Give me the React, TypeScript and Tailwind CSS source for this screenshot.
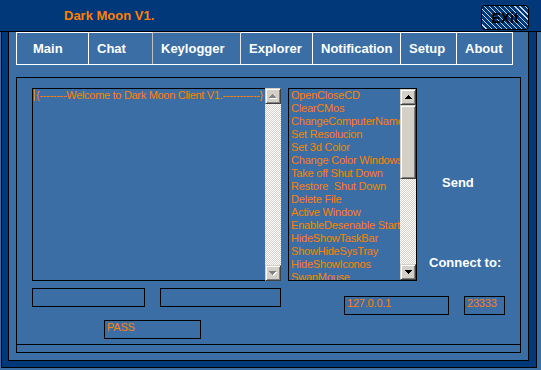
import React from "react";

const FONT = { fontFamily: '"Liberation Sans", Arial, sans-serif' };

function Arrow({ up, disabled }: { up: boolean; disabled?: boolean }) {
  const pts = up ? "3.5,0 7,4 0,4" : "0,0 7,0 3.5,4";
  if (disabled) {
    return (
      <svg width="8" height="5" viewBox="0 0 8 5" shapeRendering="crispEdges">
        <polygon points={pts} transform="translate(1,1)" fill="#ffffff" />
        <polygon points={pts} fill="#808080" />
      </svg>
    );
  }
  return (
    <svg width="7" height="4" viewBox="0 0 7 4" shapeRendering="crispEdges">
      <polygon points={pts} fill="#000000" />
    </svg>
  );
}

function SBtn({ up, disabled }: { up: boolean; disabled?: boolean }) {
  return (
    <div className="flex h-[16px] w-[16px] shrink-0 items-center justify-center border border-t-[#d4d0c8] border-l-[#d4d0c8] border-r-[#404040] border-b-[#404040] bg-[#d4d0c8] shadow-[inset_1px_1px_#ffffff,inset_-1px_-1px_#808080]">
      <Arrow up={up} disabled={disabled} />
    </div>
  );
}

function Track({ className }: { className?: string }) {
  return (
    <div
      className={
        "bg-[image:conic-gradient(#ffffff_25%,#d4d0c8_0_50%,#ffffff_0_75%,#d4d0c8_0)] bg-[length:2px_2px] " +
        (className ?? "")
      }
    />
  );
}

const tabs = [
  { label: "Main", cls: "w-[72px] pl-[16px] border-t-white border-r-white" },
  { label: "Chat", cls: "w-[64px] pl-[8px] border-t-white border-r-[#c0c0c0]" },
  { label: "Keylogger", cls: "w-[88px] pl-[8px] border-t-[#c8c8c8] border-r-[#e8e8e8]" },
  { label: "Explorer", cls: "w-[72px] pl-[8px] border-t-white border-r-white" },
  { label: "Notification", cls: "w-[88px] pl-[8px] border-t-white border-r-white" },
  { label: "Setup", cls: "w-[56px] pl-[8px] border-t-white border-r-white" },
  { label: "About", cls: "w-[56px] pl-[8px] border-t-white border-r-white" },
];

const items = [
  "OpenCloseCD",
  "ClearCMos",
  "ChangeComputerName",
  "Set Resolucion",
  "Set 3d Color",
  "Change Color Windows",
  "Take off Shut Down",
  "Restore  Shut Down",
  "Delete File",
  "Active Window",
  "EnableDesenable Start",
  "HideShowTaskBar",
  "ShowHideSysTray",
  "HideShowIconos",
  "SwapMouse",
];

export default function App() {
  return (
    <div className="h-[370px] w-[541px] overflow-hidden bg-[#3a6ea5]" style={FONT}>
      {/* Title bar */}
      <div className="flex h-[32px] w-[541px] border-b border-black bg-[#00387a]">
        <div className="flex flex-1 items-center pl-[64px] text-[13px] font-bold leading-[15px] text-[#ff8000]">
          Dark Moon V1.
        </div>
        <div className="mr-[12px] mt-[5px] flex h-[25px] w-[48px] items-center justify-center rounded-[4px] border border-black bg-[image:repeating-linear-gradient(45deg,#00387a_0px,#00387a_2.8px,#c8d4e8_2.8px,#c8d4e8_3.6px)] text-[14px] font-bold leading-[16px] text-black">
          EXit
        </div>
      </div>

      {/* Frame */}
      <div className="ml-[1px] h-[336px] w-[536px] border-x border-b border-black bg-[#00387a] pb-[6px] pl-[6px] pr-[7px]">
        <div className="h-full w-full border-x border-b border-black bg-[#3a6ea5]">
          {/* Tabs */}
          <div className="ml-[7px] flex h-[33px] w-[497px] border-b border-l border-white border-l-white">
            {tabs.map((t) => (
              <div
                key={t.label}
                className={
                  "flex h-full items-center border-r border-t text-[13px] font-bold leading-[15px] text-white " + t.cls
                }
              >
                {t.label}
              </div>
            ))}
          </div>

          {/* Panel */}
          <div className="ml-[7px] mt-[12px] h-[276px] w-[505px] border border-black">
            <div className="h-[267px] border-b border-black pl-[15px] pt-[10px] text-[11px] leading-[13px] tracking-[-0.2px] text-[#ff8000]">
              {/* Row A */}
              <div className="flex h-[193px]">
                <div className="flex w-[249px]">
                  <div className="w-[233px] overflow-hidden whitespace-nowrap border-b border-l border-t border-black pl-[1px]">
                    <span className="mr-[1px] inline-block h-[12px] w-[1px] bg-[#c5915a] align-[-2px]" />
                    <span className="tracking-[-0.3px]">{"{--------Welcome to Dark Moon Client V1.-----------}"}</span>
                  </div>
                  <div className="flex w-[16px] flex-col">
                    <SBtn up disabled />
                    <Track className="flex-1" />
                    <SBtn up={false} disabled />
                  </div>
                </div>

                <div className="ml-[7px] flex w-[129px] border border-black">
                  <div className="w-[111px] overflow-hidden pl-[2px]">
                    {items.map((it) => (
                      <div key={it} className="whitespace-pre">
                        {it}
                      </div>
                    ))}
                  </div>
                  <div className="flex w-[16px] flex-col">
                    <SBtn up />
                    <div className="h-[74px] shrink-0 border border-t-[#d4d0c8] border-l-[#d4d0c8] border-r-[#404040] border-b-[#404040] bg-[#d4d0c8] shadow-[inset_1px_1px_#ffffff,inset_-1px_-1px_#808080]" />
                    <Track className="flex-1" />
                    <SBtn up={false} />
                  </div>
                </div>

                <div className="flex flex-1 flex-col pt-[87px] text-[13px] font-bold leading-[15px] tracking-normal text-white">
                  <div className="ml-[25px]">Send</div>
                  <div className="ml-[12px] mt-[65px]">Connect to:</div>
                </div>
              </div>

              {/* Row B */}
              <div className="mt-[7px] flex">
                <div className="flex w-[249px] flex-col">
                  <div className="flex">
                    <div className="h-[19px] w-[113px] border border-black" />
                    <div className="ml-[15px] h-[19px] w-[121px] border border-black" />
                  </div>
                  <div className="ml-[72px] mt-[13px] h-[19px] w-[97px] border border-black pl-[2px]">PASS</div>
                </div>
                <div className="ml-[63px] mt-[8px] flex">
                  <div className="h-[19px] w-[105px] border border-black pl-[2px]">127.0.0.1</div>
                  <div className="ml-[15px] h-[19px] w-[41px] border border-black pl-[2px]">23333</div>
                </div>
              </div>
            </div>
          </div>
        </div>
      </div>
    </div>
  );
}
